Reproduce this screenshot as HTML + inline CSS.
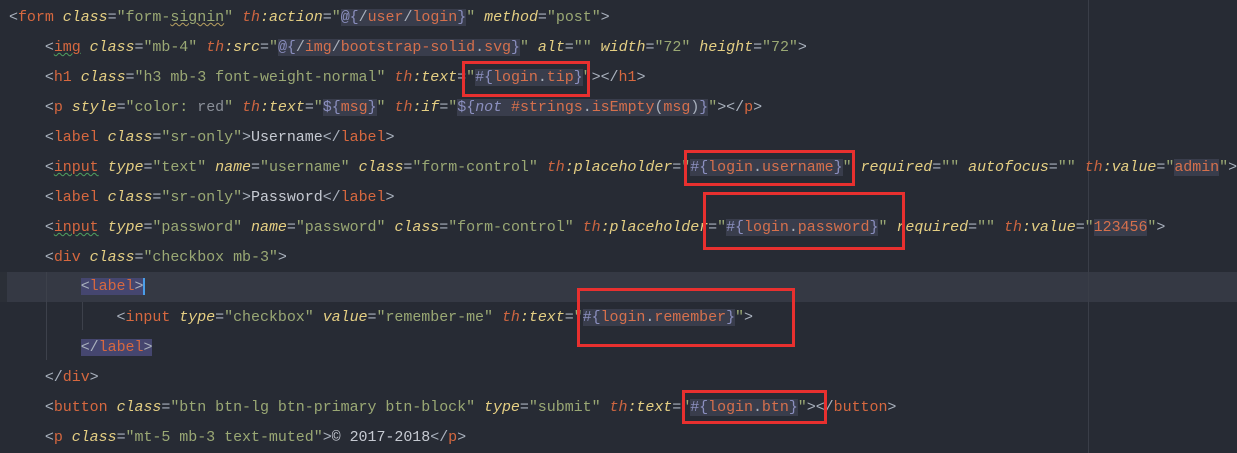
<!DOCTYPE html>
<html><head><meta charset="utf-8"><style>
body{margin:0;width:1237px;height:453px;background:#272b34;overflow:hidden;position:relative;font-family:"Liberation Mono",monospace;font-size:15px}
.l{position:absolute;left:9px;height:30px;line-height:30px;white-space:pre;color:#a9b1bd;letter-spacing:-0.04px}
.p{color:#a9b1bd}.g{color:#d7683f}.a{color:#e5cf83;font-style:italic}.t{color:#cd6540;font-style:italic}
.s{color:#9aa874}.h{background:#393d4c}.e{color:#8b8fbf}.v{color:#d6704c}.x{color:#c6cad2}.ei{color:#8b8fbf;font-style:italic}
.lb{background:#45466f}
.box{position:absolute;border:3px solid #e8302f;box-sizing:border-box}
.u{text-decoration:underline wavy #b8a060;text-decoration-thickness:1px}
.ug{text-decoration:underline wavy #4fa060;text-decoration-thickness:1px}
</style></head><body>
<div style="position:absolute;left:0;top:272px;width:1237px;height:30px;background:#353944"></div>
<div style="position:absolute;left:0;top:272px;width:7px;height:30px;background:#2b2f37"></div>
<div style="position:absolute;left:1088px;top:0;width:1px;height:453px;background:#3a3e48"></div>
<div style="position:absolute;left:46px;top:272px;width:1px;height:88px;background:#3d414b"></div>
<div style="position:absolute;left:82px;top:302px;width:1px;height:28px;background:#3d414b"></div>

<div class="l" style="top:3px">&lt;<span class="g">form</span> <span class="a">class</span>=<span class="s">"form-<span class="u">signin</span>"</span> <span class="t">th</span><span class="a">:action</span>=<span class="s">"</span><span class="h"><span class="e">@{</span>/<span class="v">user</span>/<span class="v">login</span><span class="e">}</span></span><span class="s">"</span> <span class="a">method</span>=<span class="s">"post"</span>&gt;</div>
<div class="l" style="top:33px">    &lt;<span class="g ug">img</span> <span class="a">class</span>=<span class="s">"mb-4"</span> <span class="t">th</span><span class="a">:src</span>=<span class="s">"</span><span class="h"><span class="e">@{</span>/<span class="v">img</span>/<span class="v">bootstrap-solid</span>.<span class="v">svg</span><span class="e">}</span></span><span class="s">"</span> <span class="a">alt</span>=<span class="s">""</span> <span class="a">width</span>=<span class="s">"72"</span> <span class="a">height</span>=<span class="s">"72"</span>&gt;</div>
<div class="l" style="top:63px">    &lt;<span class="g">h1</span> <span class="a">class</span>=<span class="s">"h3 mb-3 font-weight-normal"</span> <span class="t">th</span><span class="a">:text</span>=<span class="s">"</span><span class="h"><span class="e">#{</span><span class="v">login</span>.<span class="v">tip</span><span class="e">}</span></span><span class="s">"</span>&gt;&lt;/<span class="g">h1</span>&gt;</div>
<div class="l" style="top:93px">    &lt;<span class="g">p</span> <span class="a">style</span>=<span class="s">"color: <span style="color:#8a8f98">red</span>"</span> <span class="t">th</span><span class="a">:text</span>=<span class="s">"</span><span class="h"><span class="e">${</span><span class="v">msg</span><span class="e">}</span></span><span class="s">"</span> <span class="t">th</span><span class="a">:if</span>=<span class="s">"</span><span class="h"><span class="e">${</span><span class="ei">not</span> <span class="v">#strings</span>.<span class="v">isEmpty</span>(<span class="v">msg</span>)<span class="e">}</span></span><span class="s">"</span>&gt;&lt;/<span class="g">p</span>&gt;</div>
<div class="l" style="top:123px">    &lt;<span class="g">label</span> <span class="a">class</span>=<span class="s">"sr-only"</span>&gt;<span class="x">Username</span>&lt;/<span class="g">label</span>&gt;</div>
<div class="l" style="top:153px">    &lt;<span class="g ug">input</span> <span class="a">type</span>=<span class="s">"text"</span> <span class="a">name</span>=<span class="s">"username"</span> <span class="a">class</span>=<span class="s">"form-control"</span> <span class="t">th</span><span class="a">:placeholder</span>=<span class="s">"</span><span class="h"><span class="e">#{</span><span class="v">login</span>.<span class="v">username</span><span class="e">}</span></span><span class="s">"</span> <span class="a">required</span>=<span class="s">""</span> <span class="a">autofocus</span>=<span class="s">""</span> <span class="t">th</span><span class="a">:value</span>=<span class="s">"</span><span class="h"><span class="v">admin</span></span><span class="s">"</span>&gt;</div>
<div class="l" style="top:183px">    &lt;<span class="g">label</span> <span class="a">class</span>=<span class="s">"sr-only"</span>&gt;<span class="x">Password</span>&lt;/<span class="g">label</span>&gt;</div>
<div class="l" style="top:213px">    &lt;<span class="g ug">input</span> <span class="a">type</span>=<span class="s">"password"</span> <span class="a">name</span>=<span class="s">"password"</span> <span class="a">class</span>=<span class="s">"form-control"</span> <span class="t">th</span><span class="a">:placeholder</span>=<span class="s">"</span><span class="h"><span class="e">#{</span><span class="v">login</span>.<span class="v">password</span><span class="e">}</span></span><span class="s">"</span> <span class="a">required</span>=<span class="s">""</span> <span class="t">th</span><span class="a">:value</span>=<span class="s">"</span><span class="h"><span class="v">123456</span></span><span class="s">"</span>&gt;</div>
<div class="l" style="top:243px">    &lt;<span class="g">div</span> <span class="a">class</span>=<span class="s">"checkbox mb-3"</span>&gt;</div>
<div class="l" style="top:272px">        <span class="lb">&lt;<span class="g">label</span>&gt;</span><span style="border-left:2px solid #4a9ee8"></span></div>
<div class="l" style="top:303px">            &lt;<span class="g">input</span> <span class="a">type</span>=<span class="s">"checkbox"</span> <span class="a">value</span>=<span class="s">"remember-me"</span> <span class="t">th</span><span class="a">:text</span>=<span class="s">"</span><span class="h"><span class="e">#{</span><span class="v">login</span>.<span class="v">remember</span><span class="e">}</span></span><span class="s">"</span>&gt;</div>
<div class="l" style="top:333px">        <span class="lb">&lt;/<span class="g">label</span>&gt;</span></div>
<div class="l" style="top:363px">    &lt;/<span class="g">div</span>&gt;</div>
<div class="l" style="top:393px">    &lt;<span class="g">button</span> <span class="a">class</span>=<span class="s">"btn btn-lg btn-primary btn-block"</span> <span class="a">type</span>=<span class="s">"submit"</span> <span class="t">th</span><span class="a">:text</span>=<span class="s">"</span><span class="h"><span class="e">#{</span><span class="v">login</span>.<span class="v">btn</span><span class="e">}</span></span><span class="s">"</span>&gt;&lt;/<span class="g">button</span>&gt;</div>
<div class="l" style="top:423px">    &lt;<span class="g">p</span> <span class="a">class</span>=<span class="s">"mt-5 mb-3 text-muted"</span>&gt;<span class="x">© 2017-2018</span>&lt;/<span class="g">p</span>&gt;</div>

<div class="box" style="left:462px;top:61px;width:128px;height:36px"></div>
<div class="box" style="left:684px;top:150px;width:171px;height:36px"></div>
<div class="box" style="left:703px;top:192px;width:202px;height:58px"></div>
<div class="box" style="left:577px;top:288px;width:218px;height:59px"></div>
<div class="box" style="left:682px;top:390px;width:145px;height:34px"></div>
</body></html>
